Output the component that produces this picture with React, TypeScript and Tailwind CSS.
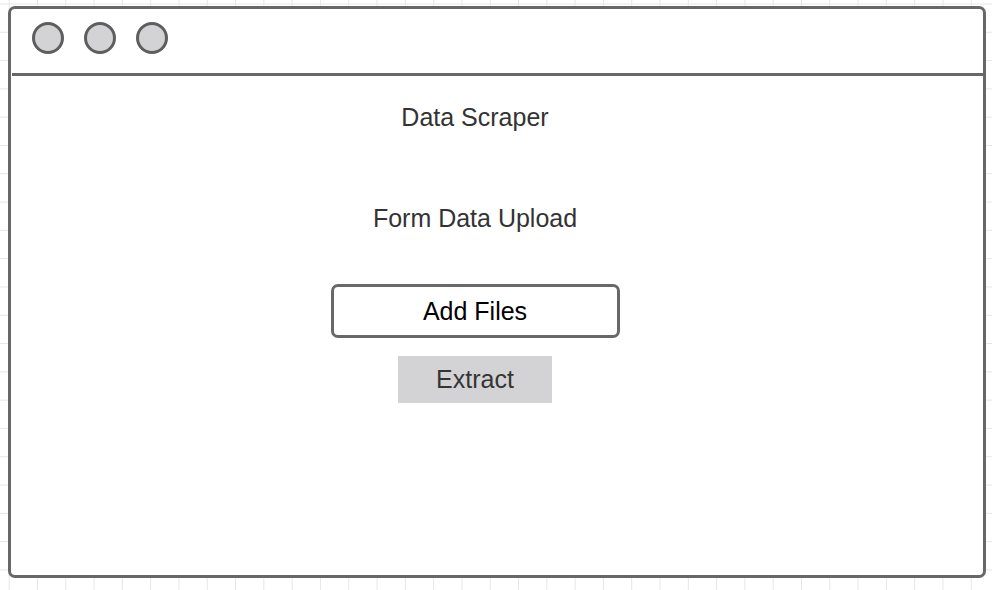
import React from 'react'

const font = { fontFamily: '"Liberation Sans", Arial, sans-serif' }

export default function App() {
  return (
    <div
      className="h-[590px] w-[992px] bg-white bg-[linear-gradient(to_right,#e6e6e6_1px,transparent_1px),linear-gradient(to_bottom,#e6e6e6_1px,transparent_1px)] bg-[size:28.3px_28.3px] bg-[position:8.7px_3.5px] pl-2 pt-[6px]"
      style={font}
    >
      {/* Window frame */}
      <div className="flex h-[572px] w-[978px] flex-col rounded-[7px] border-[3px] border-[#676767] bg-white">
        {/* Title bar */}
        <div className="ml-[1px] flex h-[67px] shrink-0 items-start gap-5 border-b-[3px] border-[#676767] pl-5 pt-[13px]">
          <div className="h-8 w-8 rounded-full border-[3px] border-[#5e5e5e] bg-[#d3d3d6]" />
          <div className="h-8 w-8 rounded-full border-[3px] border-[#5e5e5e] bg-[#d3d3d6]" />
          <div className="h-8 w-8 rounded-full border-[3px] border-[#5e5e5e] bg-[#d3d3d6]" />
        </div>

        {/* Content */}
        <div className="flex flex-1 flex-col items-center pr-[44px] pt-[27px]">
          <h1 className="text-[25px] leading-[29px] text-[#333333]">Data Scraper</h1>
          <h2 className="mt-[72px] text-[25px] leading-[29px] text-[#333333]">Form Data Upload</h2>
          <button className="mt-[51px] flex h-[54px] w-[289px] items-center justify-center rounded-[7px] border-[3px] border-[#686868] bg-white text-[25px] leading-[29px] text-black">
            Add Files
          </button>
          <button className="mt-[18px] flex h-[47px] w-[154px] items-center justify-center bg-[#d3d3d5] text-[25px] leading-[29px] text-[#353535]">
            Extract
          </button>
        </div>
      </div>
    </div>
  )
}
